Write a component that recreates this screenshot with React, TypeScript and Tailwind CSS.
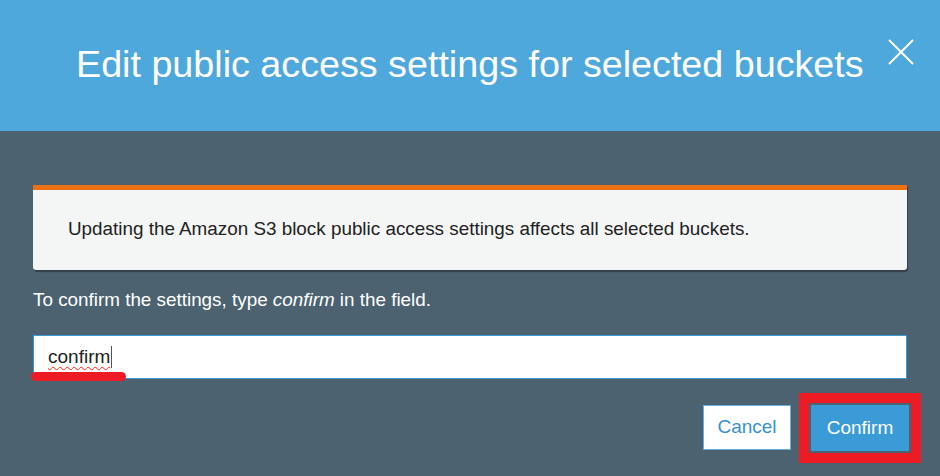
import React from "react";

export default function App() {
  return (
    <div className="w-[940px] h-[476px] overflow-hidden bg-[#4c6270] flex flex-col" style={{ fontFamily: '"Liberation Sans", Arial, sans-serif' }}>
      <div className="h-[131px] bg-[#4fa8dc] relative flex items-center pl-[76px]">
        <h1 className="text-white text-[37.7px] leading-none font-normal pb-[2px]">Edit public access settings for selected buckets</h1>
        <svg className="absolute left-[887px] top-[39px]" width="28" height="26" viewBox="0 0 28 26">
          <path d="M2 1 L26 25 M26 1 L2 25" stroke="white" strokeWidth="2" fill="none" />
        </svg>
      </div>
      <div className="px-[33px] pt-[54px] flex flex-col">
        <div className="w-[874px] border-t-[5px] border-[#ec7211] bg-[#f4f5f5] rounded-b-[3px] shadow-[1px_2px_1px_rgba(0,0,0,0.35)] h-[85px] flex items-center pl-[35px] pb-[2px]">
          <span className="text-[#222] text-[18.85px]">Updating the Amazon S3 block public access settings affects all selected buckets.</span>
        </div>
        <div className="mt-[21px] text-white text-[18.85px] leading-none">
          To confirm the settings, type <i>confirm</i> in the field.
        </div>
        <div className="mt-[25px] w-[874px] h-[44px] bg-white border border-[#3a9ad6] relative flex items-center pl-[14px]">
          <span className="text-[#222] text-[19px] underline decoration-wavy decoration-[#ff2020] decoration-1 underline-offset-[3px]">confirm</span>
          <span className="w-[1px] h-[22px] bg-[#555] ml-[1px]" />
          <div className="absolute left-[-3px] top-[36px] w-[95px] h-[9px] rounded-full bg-[#ed1c24]" />
        </div>
        <div className="mt-[14px] flex justify-end">
          <div className="flex items-start">
            <button className="w-[88px] h-[45px] bg-white border border-[#6aaede] text-[#3a8fcf] text-[19px] mt-[12px]">Cancel</button>
            <div className="ml-[8px] mr-[-14px] border-[10px] border-[#ed1c24] p-[2px]">
              <button className="w-[98px] h-[46px] bg-[#3a9bd7] text-white text-[19px] block">Confirm</button>
            </div>
          </div>
        </div>
      </div>
    </div>
  );
}
